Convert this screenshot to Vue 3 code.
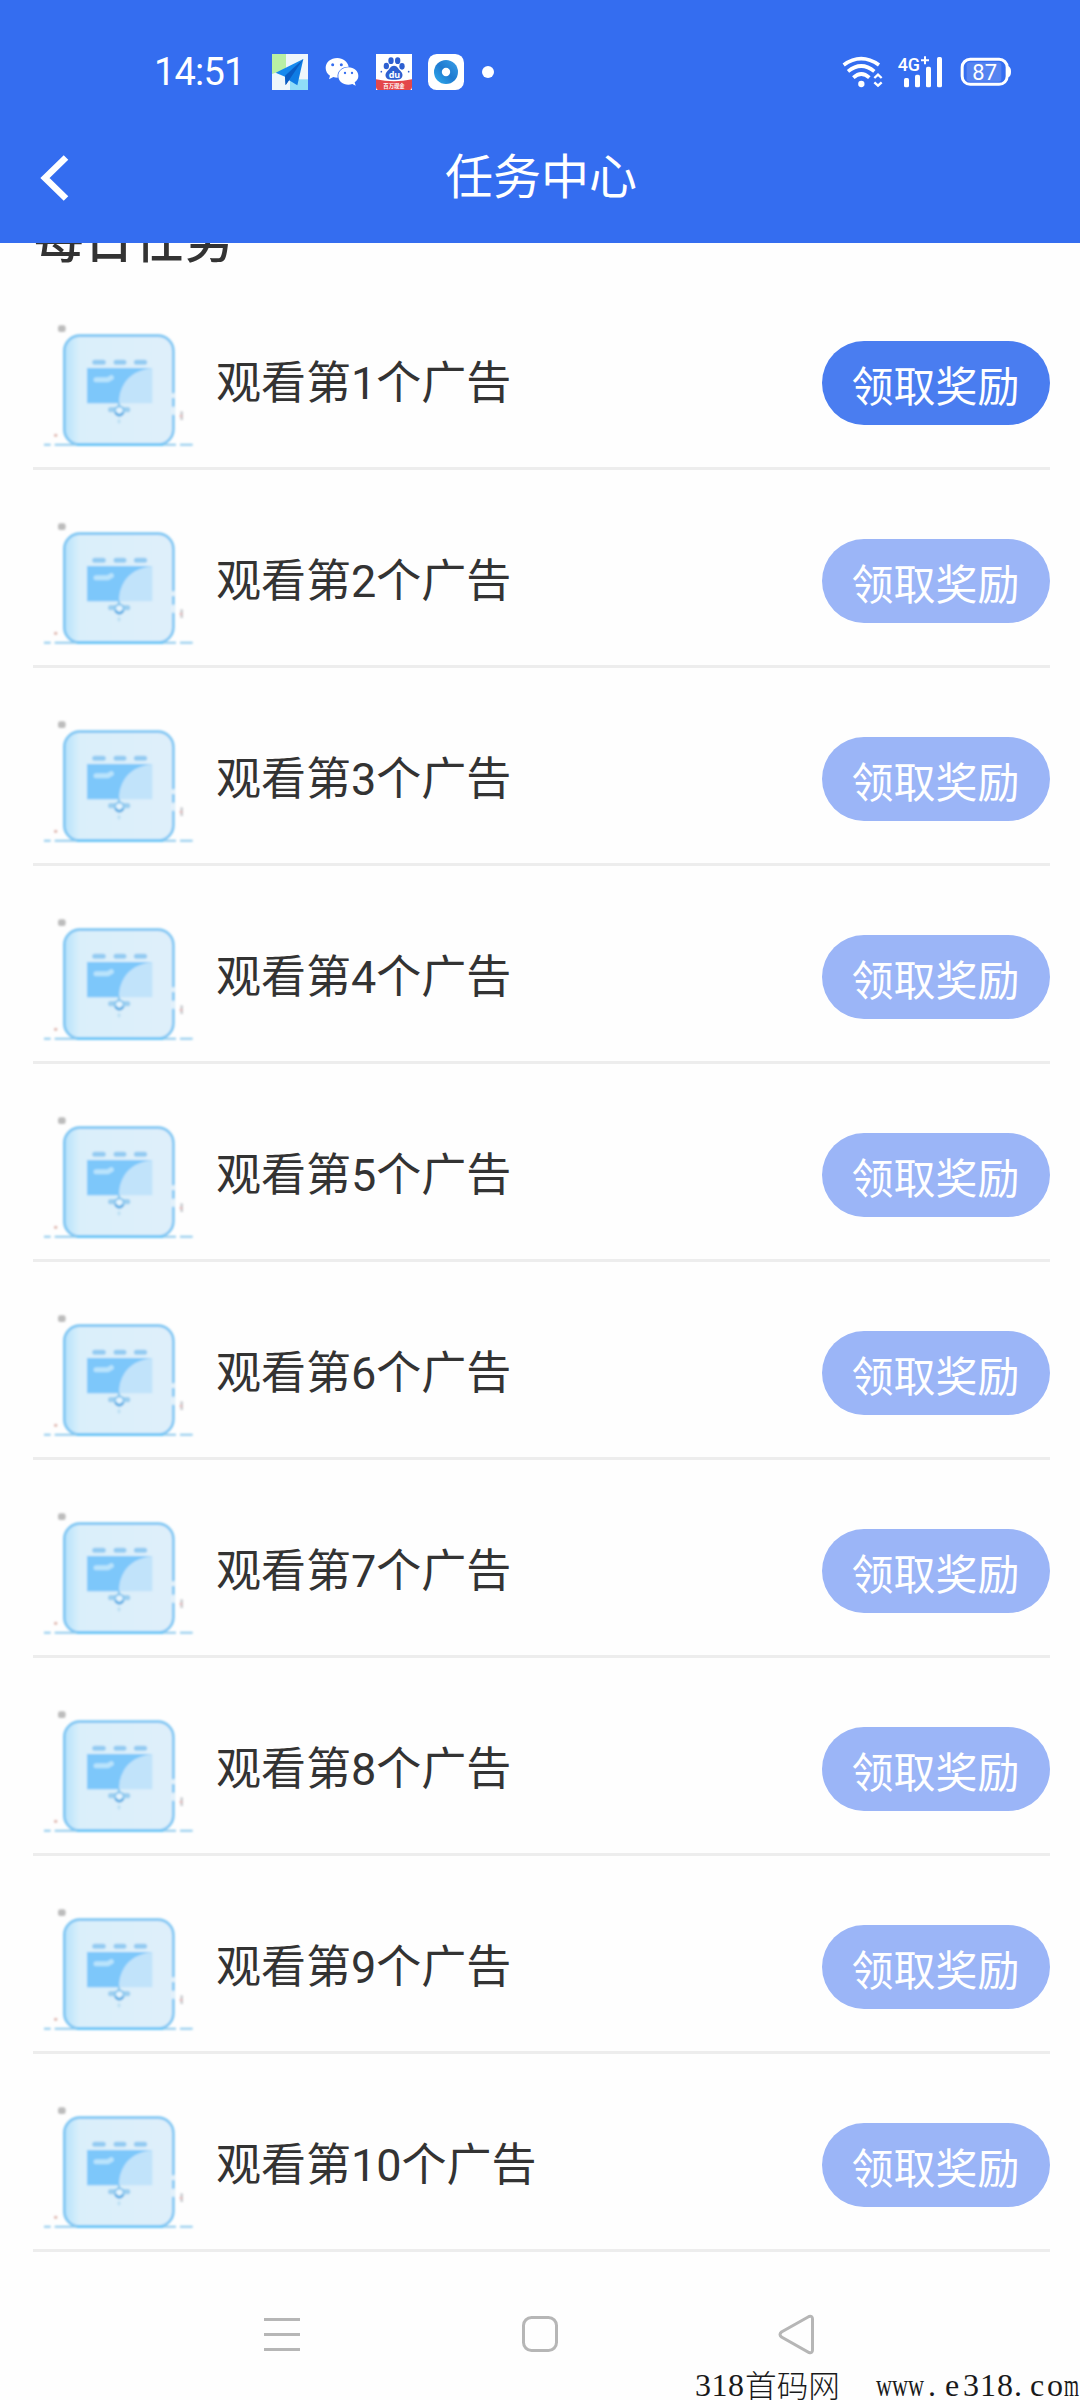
<script setup>
const tasks = Array.from({ length: 10 }, (_, i) => ({
  id: i + 1,
  title: `观看第${i + 1}个广告`,
  ready: i === 0
}))
</script>

<template>
  <div class="screen">
    <header class="top">
      <div class="status">
        <span class="time">14:51</span>
        <svg class="app-icon" viewBox="426 72 108 108" width="36" height="36">
          <rect x="426" y="72" width="108" height="108" fill="#eef6fb" />
          <path d="M426 72h42v46l-42 14z" fill="#b9f0a4" />
          <path d="M480 180v-32h54v32z" fill="#8fdcf8" />
          <path d="M520 87L437 128l28 12z" fill="#1689ee" />
          <path d="M465 138l2 27 12-17z" fill="#0a55b8" />
          <path d="M520 87l-55 49 1 8 36 22z" fill="#0f7ce4" />
          <path d="M520 87l-55 51 2 27z" fill="#0a5cc4" />
        </svg>
        <svg class="wechat" viewBox="585 72 102 108" width="34" height="36">
          <path d="M622 84c-20 0-35 13-35 30 0 10 5 18 13 23l-3 11 13-7c4 1 8 2 13 2-3-19 12-33 33-33-3-15-17-26-34-26z" fill="#fff" />
          <path d="M655 112c-17 0-30 11-30 26s13 26 30 26c4 0 8-1 12-2l10 5-3-10c7-5 11-11 11-19 0-15-13-26-30-26z" fill="#fff" />
          <g fill="#346df0"><circle cx="608" cy="104" r="4.5" /><circle cx="634" cy="104" r="4.5" /><circle cx="645" cy="129" r="3.5" /><circle cx="666" cy="129" r="3.5" /></g>
        </svg>
        <svg class="baidu" viewBox="738 72 108 108" width="36" height="36">
          <rect x="738" y="72" width="108" height="108" fill="#fff" />
          <g fill="#2d5fd0">
            <ellipse cx="769" cy="108" rx="8" ry="10" /><ellipse cx="783" cy="92" rx="8" ry="10" />
            <ellipse cx="803" cy="92" rx="8" ry="10" /><ellipse cx="816" cy="109" rx="8" ry="10" />
            <path d="M792 107c-10 0-12 9-19 15-7 7-8 13-5 20 4 8 13 7 24 7s20 1 24-7c3-7 2-13-5-20-7-6-9-15-19-15z" />
            <circle cx="754" cy="125" r="2.500" /><circle cx="836" cy="125" r="2.500" />
          </g>
          <text x="776" y="143" class="du">du</text>
          <path d="M738 148q54 12 108 0v22q0 10-10 10h-88q-10 0-10-10z" fill="#e4474b" />
          <text x="760" y="173" class="baidu-tag">百万现金</text>
        </svg>
        <svg class="ball" viewBox="894 72 108 108" width="36" height="36">
          <defs>
            <linearGradient id="ball" x1="0" y1="1" x2="1" y2="0">
              <stop offset="0" stop-color="#2fb0ee" /><stop offset=".5" stop-color="#1f7ad0" /><stop offset="1" stop-color="#3aa0e8" />
            </linearGradient>
          </defs>
          <rect x="894" y="72" width="108" height="108" rx="26" fill="#fff" />
          <circle cx="948" cy="126" r="36" fill="url(#ball)" />
          <circle cx="948" cy="126" r="12.5" fill="#fff" />
        </svg>
        <i class="dot"></i>
        <span class="grow"></span>
        <svg viewBox="66 78 123 96" width="41" height="32" fill="none" stroke="#fff">
          <path d="M71 105q52-38 106 0" stroke-width="11" />
          <path d="M84 124q40-32 79 0" stroke-width="11" />
          <path d="M100 143q24-22 48 0" stroke-width="11" />
          <circle cx="124" cy="162" r="9.5" fill="#fff" stroke="none" />
          <path d="M163 144l11-10 11 10M163 157l11 10 11-10" stroke-width="7" />
        </svg>
        <svg class="signal" viewBox="231 72 138 108" width="46" height="36">
          <text x="233" y="124" class="net" textLength="67" lengthAdjust="spacingAndGlyphs">4G</text>
          <path d="M303 91h24M315 79v24" stroke="#fff" stroke-width="6" />
          <g fill="#fff">
            <rect x="252" y="144" width="15" height="28" rx="5" /><rect x="285" y="134" width="15" height="38" rx="5" />
            <rect x="318" y="110" width="15" height="62" rx="5" /><rect x="351" y="81" width="15" height="91" rx="5" />
          </g>
        </svg>
        <svg class="battery" viewBox="420 81 156 90" width="52" height="30">
          <rect x="426.5" y="88" width="135" height="75" rx="24" fill="none" stroke="#fff" stroke-width="9" />
          <rect x="440" y="97" width="104" height="58" rx="8" fill="#5583f0" />
          <path d="M564 108q9 3 9 17t-9 17z" fill="#fff" />
          <text x="457" y="151" class="level" textLength="74" lengthAdjust="spacingAndGlyphs">87</text>
        </svg>
      </div>
      <div class="bar">
        <svg class="back" viewBox="0 0 30 48" width="30" height="48">
          <path d="M26 3.500L5 24l21 20.500" fill="none" stroke="#fff" stroke-width="6.500" />
        </svg>
        <h1>任务中心</h1>
      </div>
    </header>

    <main>
      <h2>每日任务</h2>
      <ul>
        <li v-for="t in tasks" :key="t.id">
          <svg class="pic" viewBox="30 30 480 390" width="160" height="130">
            <defs>
              <linearGradient id="tile" x1="0" x2="1">
                <stop offset="0" stop-color="#b5e2fc" /><stop offset=".14" stop-color="#daeffa" /><stop offset="1" stop-color="#dfeffa" />
              </linearGradient>
              <filter id="soft" x="-5%" y="-5%" width="110%" height="110%"><feGaussianBlur stdDeviation="2.5" /></filter>
            </defs>
            <g filter="url(#soft)">
              <rect x="103" y="77" width="327" height="327" rx="46" fill="url(#tile)" stroke="#7cc5f3" stroke-width="8" />
              <path d="M430 250v14M430 290v24" stroke="#e6f3fb" stroke-width="8" />
              <path d="M42 404h20M74 404h364M450 404h38" stroke="#90cbee" stroke-width="6" />
              <path d="M140 404h260" stroke="#68c5f7" stroke-width="8" />
              <path d="M194 157h26M258 157h24M319 157h25" stroke="#93cbf2" stroke-width="15" stroke-linecap="round" />
              <path d="M171 174h196v106H171z" fill="#c1e3fa" />
              <path d="M171 174h196q-62 8-85 48-16 26-15 58h-96z" fill="#7dc7fa" />
              <path d="M198 209h36l10-6" stroke="#b9e3fc" stroke-width="15" stroke-linecap="round" stroke-linejoin="round" fill="none" />
              <path d="M242 299h10M284 299h9" stroke="#9dcff0" stroke-width="16" stroke-linecap="round" />
              <circle cx="268" cy="302" r="13" fill="#e6f5fe" stroke="#8cc8ef" stroke-width="7" />
              <path d="M256 308q12 16 24 0" fill="none" stroke="#5faee4" stroke-width="8" />
              <path d="M267 278v12" stroke="#80c4ee" stroke-width="6" />
              <path d="M267 328v12" stroke="#bbdff4" stroke-width="8" />
              <rect x="84" y="46" width="23" height="20" rx="7" fill="#bcbcbc" />
              <path d="M455 304v26" stroke="#c5c7cb" stroke-width="7" />
              <path d="M449 318h8" stroke="#e5b7b7" stroke-width="6" />
              <circle cx="77" cy="376" r="5" fill="#deb5ad" />
            </g>
          </svg>
          <span class="title">{{ t.title }}</span>
          <button :class="{ ready: t.ready }">领取奖励</button>
        </li>
      </ul>
    </main>

    <nav>
      <svg width="40" height="44" viewBox="0 0 40 44" fill="none" stroke="#b6b6b6" stroke-width="3"><path d="M2 7.500h36M2 22.500h36M2 37.500h36" /></svg>
      <svg width="40" height="44" viewBox="0 0 40 44" fill="none" stroke="#b6b6b6" stroke-width="3"><rect x="4.500" y="5.500" width="33" height="33" rx="8" /></svg>
      <svg width="40" height="44" viewBox="0 0 40 44" fill="none" stroke="#b6b6b6" stroke-width="3"><path d="M33 4.500L5.500 20q-3 2.500 0 5L33 40.500q3.500 1 3.500-2.500V7q0-3.500-3.500-2.500z" /></svg>
    </nav>

    <svg class="mark" width="386" height="40" viewBox="0 0 386 40">
      <text x="1 17.500 34" y="36">318</text>
      <text x="51" y="37" class="cn" textLength="95" lengthAdjust="spacingAndGlyphs">首码网</text>
      <text x="182" y="36" textLength="48" lengthAdjust="spacingAndGlyphs">www</text>
      <text x="234 251 269 286 303 320 336 353" y="36">.e318.co</text>
      <text x="370" y="36" textLength="15" lengthAdjust="spacingAndGlyphs">m</text>
    </svg>
  </div>
</template>

<style>
body {
  background: #fefefe;
}
</style>

<style scoped>
.screen {
  position: relative;
  display: flex;
  flex-direction: column;
  width: 1080px;
  height: 2400px;
  overflow: hidden;
  background: #fefefe;
  font-family: Roboto, "Noto Sans CJK SC", sans-serif;
  color: #333;
}
svg {
  display: block;
  flex: none;
}
.top {
  flex: none;
  height: 243px;
  box-sizing: border-box;
  background: #346df0;
  color: #fff;
}
.status {
  display: flex;
  align-items: center;
  height: 144px;
  padding: 0 68px 0 154px;
}
.time {
  width: 118px;
  font: 400 38px/44px Roboto, sans-serif;
  letter-spacing: -0.8px;
}
.wechat { margin-left: 17px; }
.baidu { margin-left: 17px; }
.ball { margin-left: 16px; }
.dot {
  width: 12px;
  height: 12px;
  margin-left: 18px;
  border-radius: 50%;
  background: #fff;
}
.grow { flex: 1; }
.signal { margin-left: 14px; }
.battery { margin-left: 17px; }
.du { font: 700 27px "Noto Sans", sans-serif; fill: #fff; }
.baidu-tag { font: 700 16px "Noto Sans CJK SC", sans-serif; fill: #fff; }
.net { font: 500 53px Roboto, sans-serif; fill: #fff; }
.level { font: 400 64px Roboto, sans-serif; fill: #fff; }
.bar {
  display: grid;
  grid-template-columns: 102px 1fr 100px;
  align-items: center;
  height: 68px;
}
.back { margin-left: 40px; }
h1 {
  margin: 0;
  text-align: center;
  font-weight: 400;
  font-size: 48px;
  line-height: 64px;
}
main {
  flex: none;
  height: 2009px;
  padding: 0 30px 0 33px;
  overflow: hidden;
}
h2 {
  margin: -32px 0 0 1px;
  height: 61px;
  font-size: 49.5px;
  font-weight: 500;
  line-height: 60px;
  letter-spacing: 0.7px;
}
ul {
  margin: 0;
  padding: 0;
  list-style: none;
}
li {
  display: flex;
  align-items: center;
  box-sizing: border-box;
  height: 198px;
  padding-top: 27px;
  border-bottom: 3px solid #ededed;
}
.pic { margin: 4px 0 0 7px; }
.title {
  flex: 1;
  margin-left: 16px;
  padding-top: 2px;
  font-size: 45px;
  line-height: 60px;
}
button {
  width: 228px;
  height: 84px;
  padding: 1px 1px 0 0;
  border: 0;
  border-radius: 42px;
  background: #9bb5f7;
  color: #fff;
  font: 400 42px/60px "Noto Sans CJK SC", sans-serif;
}
button.ready { background: #4a7df0; }
nav {
  display: flex;
  justify-content: space-between;
  height: 44px;
  margin: 60px 264px 0 262px;
}
.mark {
  position: absolute;
  right: 0;
  bottom: 0;
}
.mark text {
  font: 32px "Liberation Serif", serif;
  fill: #1a1a1a;
}
.mark .cn {
  font: 300 31px "Noto Sans CJK SC", sans-serif;
}
</style>
